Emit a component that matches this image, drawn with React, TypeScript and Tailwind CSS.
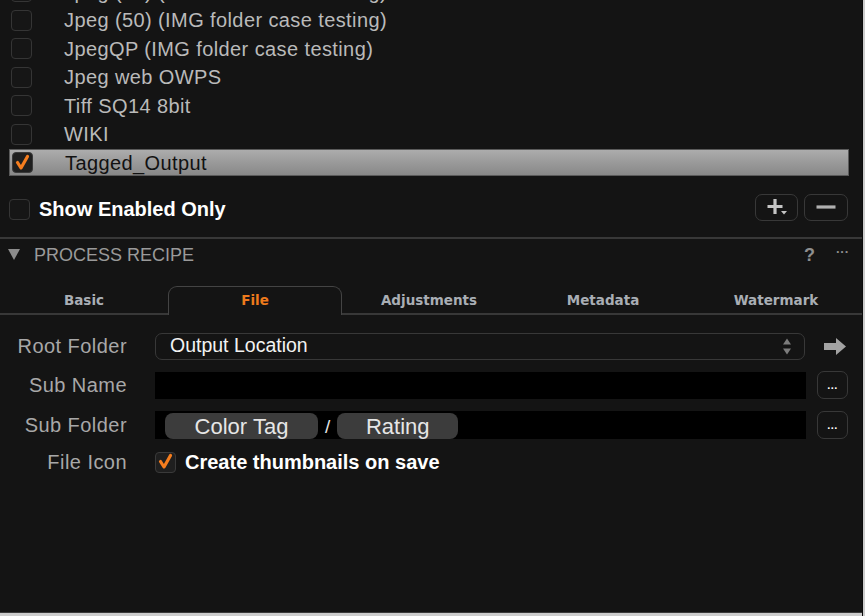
import React from 'react';

const presets = [
  'Jpeg (80) (IMG folder case testing)',
  'Jpeg (50) (IMG folder case testing)',
  'JpegQP (IMG folder case testing)',
  'Jpeg web OWPS',
  'Tiff SQ14 8bit',
  'WIKI',
  'Tagged_Output',
];

const tabs = [
  { name: 'Basic', w: 'w-[168px]' },
  { name: 'File', w: 'w-[174px]' },
  { name: 'Adjustments', w: 'w-[174px]' },
  { name: 'Metadata', w: 'w-[174px]' },
  { name: 'Watermark', w: 'flex-1' },
];

function CheckBox({ checked, dark }: { checked?: boolean; dark?: boolean }) {
  return (
    <div
      className={
        'relative w-[21px] h-[21px] shrink-0 rounded-[4px] border-[1.5px] ' +
        (dark ? 'border-[#3a3a3a] bg-[#1f1f1f]' : 'border-[#353535] bg-[#161616]')
      }
    >
      {checked && (
        <svg className="absolute left-[-1.5px] top-[-1.5px]" width="21" height="21" viewBox="0 0 21 21">
          <path
            d="M5.5 10.5 L9 16 L15.5 4.5"
            fill="none"
            stroke="#f57d1e"
            strokeWidth="3.2"
            strokeLinecap="round"
            strokeLinejoin="round"
          />
        </svg>
      )}
    </div>
  );
}

function MoreButton() {
  return (
    <div className="w-[31px] h-[28px] shrink-0 rounded-[7px] border-[1.5px] border-[#383838] flex items-end justify-center pb-[7px]">
      <span className="text-[11px] leading-none text-white font-bold tracking-[0.5px]">...</span>
    </div>
  );
}

export default function App() {
  return (
    <div
      className="w-[865px] h-[616px] bg-[#141414] overflow-hidden flex"
      style={{ fontFamily: '"Liberation Sans", Arial, sans-serif' }}
    >
      <div className="flex-1 min-w-0 flex flex-col border-b-[3px] border-[#cdcdcd]">
        {/* recipe list */}
        <div className="mt-[-22px] flex flex-col">
          {presets.map((p, i) => {
            const selected = i === presets.length - 1;
            return (
              <div key={p} className="h-[28.5px]">
                <div
                  className={
                    'ml-[9px] w-[840px] h-[27px] flex items-center pl-[2px] ' +
                    (selected
                      ? 'bg-gradient-to-b from-[#acacac] to-[#888888] border border-[#5a5a5a] pl-[1px]'
                      : '')
                  }
                >
                  <CheckBox checked={selected} dark={selected} />
                  <span
                    className={
                      'ml-[32px] text-[20px] leading-none tracking-[0.4px] ' +
                      (selected ? 'text-[#111111]' : 'text-[#bababa]')
                    }
                  >
                    {p}
                  </span>
                </div>
              </div>
            );
          })}
        </div>

        {/* show enabled + buttons */}
        <div className="h-[59px] flex items-center justify-between pl-[9px] pr-[14px]">
          <div className="flex items-center mt-[4px]">
            <CheckBox />
            <span className="ml-[9px] text-[20px] font-bold text-white leading-none">Show Enabled Only</span>
          </div>
          <div className="flex gap-[6px]">
            <div className="w-[43px] h-[27px] rounded-[7px] border-[1.5px] border-[#383838] flex items-center justify-center">
              <svg width="26" height="20" viewBox="0 0 26 20">
                <path d="M11 2 V17 M3.5 9.5 H18.5" stroke="#c4c4c4" strokeWidth="3.2" />
                <path d="M17 14 H23 L20 17.5 Z" fill="#c4c4c4" />
              </svg>
            </div>
            <div className="w-[44px] h-[27px] rounded-[7px] border-[1.5px] border-[#383838] flex items-center justify-center">
              <svg width="22" height="6" viewBox="0 0 22 6">
                <path d="M1.5 3 H20.5" stroke="#b0b0b0" strokeWidth="3.2" />
              </svg>
            </div>
          </div>
        </div>

        <div className="h-[2px] bg-[#383838]" />

        {/* section header */}
        <div className="h-[32px] flex items-center pl-[8px] pr-[13px]">
          <svg width="12" height="11" viewBox="0 0 12 11">
            <path d="M0 0 H12 L6 11 Z" fill="#8c8c8c" />
          </svg>
          <span className="ml-[14px] text-[18px] text-[#9a9a9a] leading-none">PROCESS RECIPE</span>
          <span className="ml-auto text-[18px] font-bold text-[#8e8e8e] leading-none">?</span>
          <span className="ml-[21px] text-[13px] font-bold text-[#8e8e8e] leading-none mb-[6px]">···</span>
        </div>
        <div className="h-[15px]" />

        {/* tabs */}
        <div className="flex h-[29px]" style={{ fontFamily: '"DejaVu Sans", Verdana, sans-serif' }}>
          {tabs.map((t) => {
            const active = t.name === 'File';
            return (
              <div
                key={t.name}
                className={
                  t.w +
                  ' flex items-center justify-center text-[13.5px] font-bold ' +
                  (active
                    ? 'border-t-[1.5px] border-x-[1.5px] border-[#444444] rounded-t-[9px] text-[#ee7a1c]'
                    : 'border-b-2 border-[#383838] pt-[3px] text-[#a9aeb4]')
                }
              >
                {t.name}
              </div>
            );
          })}
        </div>

        {/* form */}
        <div className="pt-[18px] pr-[14px] flex flex-col text-[20px] leading-none tracking-[0.45px]">
          <div className="h-[27px] flex items-center">
            <span className="w-[127px] text-right text-[#a8a8a8]">Root Folder</span>
            <div className="ml-[28px] w-[650px] h-[27px] rounded-[7px] border-[1.5px] border-[#383838] flex items-center pl-[14px] pr-[12px]">
              <span className="text-[19.5px] tracking-normal text-[#f2f2f2]">Output Location</span>
              <svg className="ml-auto" width="10" height="19" viewBox="0 0 10 19">
                <path d="M1 7.5 L5 1.5 L9 7.5 Z M1 11.5 L5 17.5 L9 11.5 Z" fill="#7c7c7c" />
              </svg>
            </div>
            <svg className="ml-auto mr-[2px]" width="22" height="17" viewBox="0 0 22 17">
              <path d="M0 5 H12 V0 L22 8.5 L12 17 V12 H0 Z" fill="#a3a3a3" />
            </svg>
          </div>

          <div className="h-[27px] mt-[12px] flex items-center">
            <span className="w-[127px] text-right text-[#a8a8a8]">Sub Name</span>
            <div className="ml-[28px] w-[651px] h-[27px] bg-black" />
            <div className="ml-auto">
              <MoreButton />
            </div>
          </div>

          <div className="h-[28px] mt-[12px] flex items-center">
            <span className="w-[127px] text-right text-[#a8a8a8]">Sub Folder</span>
            <div className="ml-[28px] w-[651px] h-[28px] bg-black flex items-end pl-[10px] tracking-normal">
              <div className="w-[153px] h-[26px] rounded-[8px] bg-[#3c3c3c] flex items-center justify-center pt-[2px] text-[22px] text-[#e6e6e6]">
                Color Tag
              </div>
              <span className="mx-[7px] self-center mt-[3px] text-[19px] text-[#e6e6e6]">/</span>
              <div className="w-[121px] h-[26px] rounded-[8px] bg-[#3c3c3c] flex items-center justify-center pt-[2px] text-[22px] text-[#e6e6e6]">
                Rating
              </div>
            </div>
            <div className="ml-auto">
              <MoreButton />
            </div>
          </div>

          <div className="h-[21px] mt-[13px] flex items-center">
            <span className="w-[127px] text-right text-[#a8a8a8]">File Icon</span>
            <div className="ml-[28px]">
              <CheckBox checked dark />
            </div>
            <span className="ml-[9px] font-bold tracking-normal text-white">Create thumbnails on save</span>
          </div>
        </div>

        <div className="mt-auto h-[1.5px] bg-[#3a3a3a]" />
      </div>
      <div className="w-[3px] h-full bg-[#cdcdcd] border-l border-[#0c0c0c]" />
    </div>
  );
}
